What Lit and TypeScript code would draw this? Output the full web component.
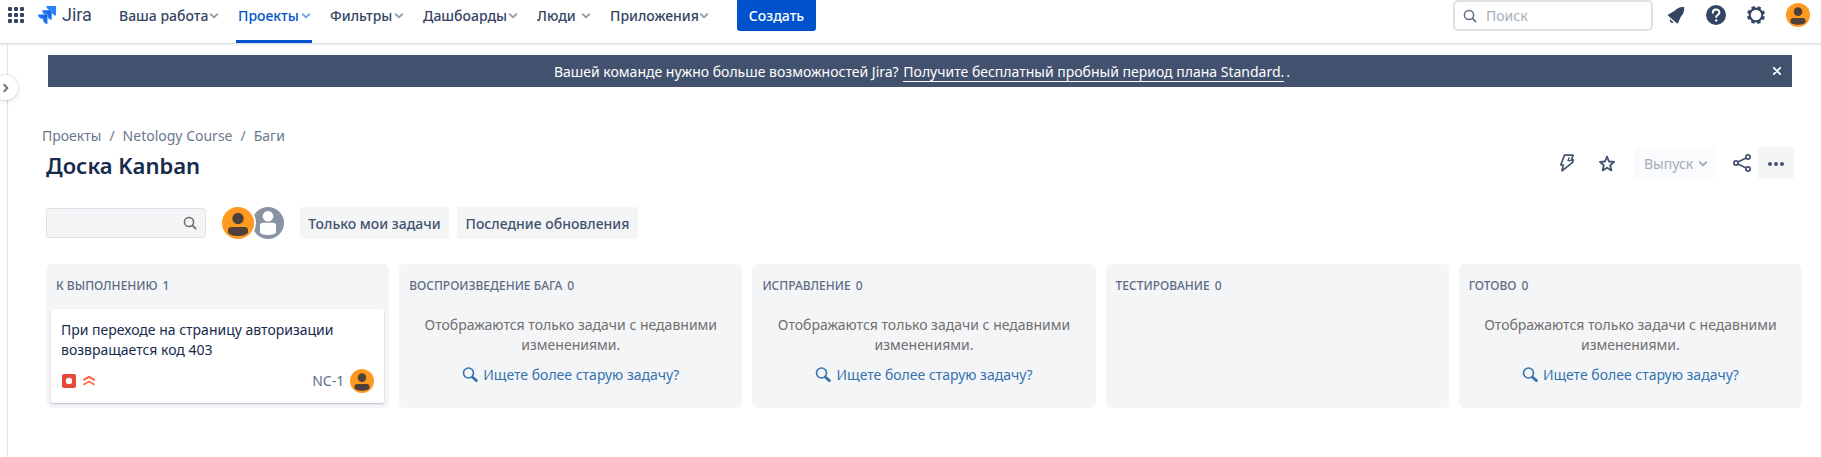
import { LitElement, html, css, svg } from "lit";
import { customElement, property } from "lit/decorators.js";

const chevron = html`<svg class="chev" width="10" height="8" viewBox="0 0 10 8" aria-hidden="true">
  <path d="M1.8 2.2 5 5.4 8.2 2.2" fill="none" stroke="currentColor" stroke-width="2" stroke-linecap="round" stroke-linejoin="round"/>
</svg>`;

const lens = html`<svg width="14" height="14" viewBox="0 0 14 14" aria-hidden="true">
  <circle cx="6" cy="6" r="4.6" fill="none" stroke="currentColor" stroke-width="1.5"/>
  <path d="M9.4 9.4 12.6 12.6" stroke="currentColor" stroke-width="1.7" stroke-linecap="round"/>
</svg>`;

@customElement("user-avatar")
class UserAvatar extends LitElement {
  @property({ type: Number }) size = 24;
  @property() kind = "user";
  static styles = css`
    :host { display: inline-flex; flex: none; }
    svg { display: block; }
  `;
  render() {
    const user = svg`<circle cx="16" cy="16" r="16" fill="#ff991f"/>
      <circle cx="16" cy="11.5" r="5.7" fill="#50403a"/>
      <path d="M6 23.500q0-3.500 3.500-3.500h13q3.500 0 3.500 3.500v1.500c0 2.500-5 4-10 4S6 27.500 6 25z" fill="#50403a"/>`;
    const none = svg`<circle cx="16" cy="16" r="16" fill="#8993a4"/>
      <circle cx="16" cy="9.300" r="5.300" fill="#fff"/>
      <path d="M8 18.800q0-3 3-3h10q3 0 3 3v6.200c0 2-4 3-8 3s-8-1-8-3z" fill="#fff"/>`;
    return html`<svg width=${this.size} height=${this.size} viewBox="0 0 32 32" role="img" aria-label="Аватар">
      ${this.kind === "user" ? user : none}</svg>`;
  }
}

@customElement("top-bar")
class TopBar extends LitElement {
  static styles = css`
    :host { display: block; color: #344563; }
    * { box-sizing: border-box; }
    button, input { font: inherit; color: inherit; }
    button { border: 0; background: none; padding: 0; cursor: pointer; }
    svg { display: block; flex: none; }
    .bar { display: flex; align-items: flex-start; height: 44px; padding: 0 11px 0 8px; background: #fff;
      border-bottom: 1px solid #dcdfe5; box-shadow: 0 1px 2px rgba(9,30,66,.1); }
    .apps { display: flex; align-items: center; height: 30px; }
    .logo { display: flex; align-items: center; gap: 6px; height: 30px; width: 53px; margin: 0 26px 0 14px; text-decoration: none;
      color: #344563; font: 400 18px/30px Roboto, sans-serif; }
    nav { display: flex; gap: 16px; }
    .item { display: flex; align-items: center; justify-content: space-between; height: 43px; padding: 0 1px 9px 2px; font-weight: 500;
      border-bottom: 3px solid transparent; white-space: nowrap; }
    .item .chev { opacity: .5; }
    .active { color: #0052cc; border-bottom-color: #0052cc; }
    .create { height: 31px; width: 79px; margin-left: 27px; border-radius: 0 0 3px 3px; background: #0052cc; color: #fff; font-weight: 500; }
    .search { display: flex; align-items: center; gap: 9px; width: 200px; height: 31px; margin-left: auto; padding: 0 8px;
      border: 2px solid #dfe1e6; border-radius: 5px; color: #5e6c84; }
    .search input { flex: 1; min-width: 0; border: 0; outline: 0; padding: 0; background: none; }
    .search input::placeholder { color: #a5adba; opacity: 1; }
    .tools { display: flex; align-items: center; gap: 16px; height: 30px; margin: 0 0 0 11px; }
    .tools user-avatar { margin-left: 2px; }
  `;
  items = [["Ваша работа", 103], ["Проекты", 76], ["Фильтры", 77], ["Дашбоарды", 98], ["Люди", 57], ["Приложения", 102]] as const;
  render() {
    return html`<header class="bar">
      <button class="apps" aria-label="Приложения Atlassian"><svg width="16" height="16" viewBox="0 0 16 16" fill="#344563">
        ${[0, 6, 12].map(y => [0, 6, 12].map(x => svg`<rect x=${x} y=${y} width="4" height="4" rx="1"/>`))}
      </svg></button>
      <a class="logo" href="#"><svg width="18" height="18" viewBox="0 0 18 18" aria-hidden="true">
          <defs><linearGradient id="g" x1="1" y1="0" x2="0" y2="1"><stop offset=".1" stop-color="#0f5fd8"/><stop offset=".7" stop-color="#2684ff"/></linearGradient></defs>
          <path d="M8.400 0H18v9.600a4.300 4.300 0 0 1-4.300-4.300V4.300h-1A4.300 4.300 0 0 1 8.400 0z" fill="#2684ff"/>
          <path d="M4.200 4.300h9.500v9.500a4.300 4.300 0 0 1-4.300-4.300V8.600h-1a4.300 4.300 0 0 1-4.200-4.300z" fill="url(#g)"/>
          <path d="M0 8.600h9.400V18a4.300 4.300 0 0 1-4.300-4.300v-.900h-.900A4.200 4.200 0 0 1 0 8.600z" fill="url(#g)"/>
        </svg>Jira</a>
      <nav>${this.items.map(([t, w], i) => html`<button class="item ${i === 1 ? "active" : ""}" style="width:${w}px">${t}${chevron}</button>`)}</nav>
      <button class="create">Создать</button>
      <label class="search">${lens}<input type="search" placeholder="Поиск" aria-label="Поиск"></label>
      <div class="tools">
        <button aria-label="Уведомления"><svg width="24" height="24" viewBox="0 0 24 24" fill="#344563">
          <path d="M20.200 4.200C16 3.600 12.500 6 10 8.300L4.300 11.600q-.8.500-.1 1.100l8.600 7.500q.8.600 1.200-.3l3-6.300c2.200-2.500 3.500-5.500 3.200-9.400z"/>
          <path d="M6 16.200l3.700 3.400c-1.700 1.500-4.500-.8-3.700-3.400z"/></svg></button>
        <button aria-label="Справка"><svg width="24" height="24" viewBox="0 0 24 24">
          <circle cx="12" cy="12" r="10" fill="#344563"/>
          <path d="M8.800 9.800c0-4.300 6.600-4.200 6.600-.2 0 2.500-3.200 2.300-3.200 4.400" fill="none" stroke="#fff" stroke-width="2" stroke-linecap="round"/>
          <circle cx="12.200" cy="17.400" r="1.200" fill="#fff"/></svg></button>
        <button aria-label="Настройки"><svg width="24" height="24" viewBox="0 0 24 24" fill="none" stroke="#344563">
          <circle cx="12" cy="12" r="6.300" stroke-width="2.200"/>
          <circle cx="12" cy="12" r="7.800" stroke-width="2.400" stroke-dasharray="3.400 2.726" stroke-dashoffset="-1.363"/></svg></button>
        <user-avatar size="24"></user-avatar>
      </div>
    </header>`;
  }
}

@customElement("app-root")
class AppRoot extends LitElement {
  static styles = css`
    :host { display: block; min-height: 100vh; background: #fff; color: #172b4d;
      font: 14px/20px "Noto Sans", "Open Sans", sans-serif; }
    * { box-sizing: border-box; }
    .shell { display: flex; flex-direction: column; min-height: 100vh; }
    button, input { font: inherit; color: inherit; }
    button { border: 0; background: none; padding: 0; cursor: pointer; }
    a { color: inherit; text-decoration: none; }
    svg { display: block; flex: none; }
    .body { display: flex; flex: 1; }
    .side { position: relative; flex: none; width: 8px; border-right: 1px solid #dfe1e6; }
    .toggle { position: absolute; top: 31px; right: -11px; width: 25px; height: 25px; padding-left: 1px; border-radius: 50%; background: #fff; color: #6b778c;
      display: grid; place-items: center; box-shadow: 0 0 0 1px rgba(9,30,66,.08), 0 2px 4px 1px rgba(9,30,66,.08); }
    main { flex: 1; min-width: 0; padding: 11px 19px 0 38px; }
    .banner { display: flex; align-items: center; height: 32px; margin: 0 10px 0 2px; padding: 0 10px 0 24px; background: #42526e; color: #fff; }
    .banner p { flex: 1; margin: 0; padding-top: 1px; text-align: center; }
    .banner a { margin: 0 2px 0 1px; border-bottom: 1px solid #fff; }
    .crumbs { display: flex; gap: 8px; margin: 39px 0 0 -4px; color: #6b778c; }
    .head { display: flex; align-items: center; height: 32px; margin-top: 1px; }
    h1 { margin: 0; padding-top: 3px; font-size: 22px; line-height: 32px; font-weight: 600; }
    .acts { display: flex; align-items: center; margin: 0 8px 0 auto; color: #42526e; }
    .acts .ic { display: grid; place-items: center; width: 32px; height: 32px; }
    .acts .star { margin: 0 11px 0 8px; }
    .btn { height: 32px; padding-top: 1px; border-radius: 3px; background: #f4f5f7; color: #42526e; font-weight: 500; white-space: nowrap; }
    .release { display: flex; align-items: center; justify-content: space-between; width: 82px; padding: 1px 8px 0 10px; background: #fafbfc; color: #a5adba; font-weight: 400; margin-right: 10px; }
    .more { display: grid; place-items: center; width: 36px; }
    .filters { display: flex; align-items: center; margin-top: 28px; }
    .find { display: flex; align-items: center; width: 160px; height: 30px; padding: 0 8px; border: 1px solid #dfe1e6; border-radius: 3px; background: #f4f5f7; color: #6b6b6b; }
    .find input { flex: 1; min-width: 0; border: 0; outline: 0; background: none; padding: 0; }
    .people { display: flex; margin: 0 16px; }
    .people user-avatar:first-child { z-index: 1; margin: -2px -4px -2px -2px; border: 2px solid #fff; border-radius: 50%; }
    .mine { width: 149px; margin-right: 8px; }
    .recent { width: 181px; }
    .board { display: grid; grid-template-columns: repeat(5, minmax(0, 1fr)); gap: 10px; margin-top: 25px; }
    .col { min-height: 144px; padding: 12px 5px 5px; border-radius: 5px; background: #f4f5f7; }
    h2 { display: flex; gap: 5px; margin: 0 0 13px; padding: 0 5px; font-size: 12px; line-height: 20px; font-weight: 500; color: #5e6c84; text-transform: uppercase; }
    .card { padding: 11px 10px 10px; border-radius: 2px; background: #fff; box-shadow: 0 1px 2px rgba(9,30,66,.25); }
    .card p { margin: 0; max-width: 280px; }
    .meta { display: flex; align-items: center; gap: 6px; margin-top: 9px; }
    .key { margin-left: auto; color: #5e6c84; }
    .empty { padding: 6px 20px 0; text-align: center; color: #707070; }
    .empty p { margin: 0 0 10px; }
    .empty a { display: inline-flex; align-items: center; gap: 5px; color: #3572b0; }
  `;
  cols = [["К выполнению", 1], ["Воспроизведение бага", 0], ["Исправление", 0], ["Тестирование", 0], ["Готово", 0]] as const;
  card() {
    return html`<article class="card">
      <p>При переходе на страницу авторизации возвращается код 403</p>
      <div class="meta">
        <svg width="16" height="16" viewBox="0 0 16 16" role="img" aria-label="Баг"><rect x="1" y="1" width="14" height="14" rx="2" fill="#e5493a"/><circle cx="8" cy="8" r="3.200" fill="#fff"/></svg>
        <svg width="12" height="12" viewBox="0 0 12 12" role="img" aria-label="Высокий приоритет" fill="none" stroke-width="1.800" stroke-linecap="round" stroke-linejoin="round">
          <path d="M.9 4.800 6 1.900l5.100 2.900" stroke="#ff5630"/><path d="M.9 9.400 6 6.500l5.100 2.900" stroke="#ff7452"/></svg>
        <a class="key" href="#">NC-1</a><user-avatar size="24"></user-avatar>
      </div></article>`;
  }
  empty() {
    return html`<div class="empty"><p>Отображаются только задачи с недавними изменениями.</p>
      <a href="#"><svg width="16" height="16" viewBox="0 0 16 16" fill="none" stroke="#3572b0"><circle cx="6.500" cy="6" r="5" stroke-width="1.600"/><path d="M10.600 10.200 14.400 13.600" stroke-width="2.800" stroke-linecap="round"/></svg>Ищете более старую задачу?</a></div>`;
  }
  render() {
    return html`<div class="shell"><top-bar></top-bar><div class="body">
      <aside class="side"><button class="toggle" aria-label="Развернуть панель"><svg width="8" height="10" viewBox="0 0 8 10"><path d="M2.200 1.800 5.400 5 2.200 8.200" fill="none" stroke="currentColor" stroke-width="2" stroke-linecap="round" stroke-linejoin="round"/></svg></button></aside>
      <main>
        <div class="banner"><p>Вашей команде нужно больше возможностей Jira? <a href="#">Получите бесплатный пробный период плана Standard.</a>.</p>
          <button aria-label="Закрыть"><svg width="10" height="10" viewBox="0 0 10 10"><path d="M1.800 1.800l6.400 6.400M8.200 1.800 1.800 8.200" stroke="#fff" stroke-width="1.800" stroke-linecap="round"/></svg></button></div>
        <nav class="crumbs"><a href="#">Проекты</a><span>/</span><a href="#">Netology Course</a><span>/</span><a href="#">Баги</a></nav>
        <div class="head"><h1>Доска Kanban</h1><div class="acts">
          <button class="ic" aria-label="Автоматизация"><svg width="16" height="20" viewBox="0 0 16 20" fill="none" stroke="currentColor" stroke-width="1.700" stroke-linejoin="round"><path d="M5.400 2.200H14L12.500 6.800H14.200L13.600 9.400 3 17.800 4.300 12H1.800z"/><path d="M10.200 4.200 9 7.600h3.500" stroke-width="1.300"/></svg></button>
          <button class="ic star" aria-label="В избранное"><svg width="18" height="18" viewBox="0 0 18 18" fill="none" stroke="currentColor" stroke-width="1.800" stroke-linejoin="round"><path d="M9 2.700l2 4.800 5.100.4-3.900 3.400 1.200 5.100L9 13.700l-4.400 2.700 1.200-5.100L1.900 7.900 7 7.500z"/></svg></button>
          <button class="btn release" disabled>Выпуск ${chevron}</button>
          <button class="ic" aria-label="Поделиться"><svg width="20" height="20" viewBox="0 0 20 20" fill="none" stroke="currentColor" stroke-width="1.800"><circle cx="4" cy="10" r="2.100"/><circle cx="16" cy="4" r="2.100"/><circle cx="16" cy="16" r="2.100"/><path d="M5.900 9 14.100 5M5.900 11l8.200 4"/></svg></button>
          <button class="btn more" aria-label="Ещё"><svg width="16" height="4" viewBox="0 0 16 4" fill="currentColor"><circle cx="2" cy="2" r="2"/><circle cx="8" cy="2" r="2"/><circle cx="14" cy="2" r="2"/></svg></button>
        </div></div>
        <div class="filters">
          <label class="find"><input type="text" aria-label="Поиск на доске">${lens}</label>
          <div class="people"><user-avatar size="32"></user-avatar><user-avatar size="32" kind="none"></user-avatar></div>
          <button class="btn mine">Только мои задачи</button><button class="btn recent">Последние обновления</button>
        </div>
        <div class="board">${this.cols.map(([name, n], i) => html`<section class="col"><h2>${name} <span>${n}</span></h2>${i === 0 ? this.card() : i === 3 ? "" : this.empty()}</section>`)}</div>
      </main></div></div>`;
  }
}
